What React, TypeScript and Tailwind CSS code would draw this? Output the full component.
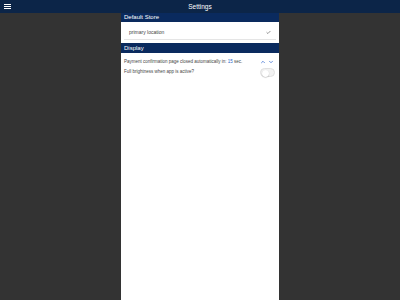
import { Check, ChevronUp, ChevronDown } from "lucide-react";

export default function App() {
  return (
    <div className="flex h-[300px] w-[400px] flex-col bg-[#333333] font-['Liberation_Sans',Arial,sans-serif]">
      <header className="relative flex h-[13px] items-center justify-center bg-[#0c2548]">
        <div className="absolute left-[4px] top-[4px] flex flex-col gap-[1px]">
          <span className="block h-[1px] w-[7px] bg-white" />
          <span className="block h-[1px] w-[7px] bg-white" />
          <span className="block h-[1px] w-[7px] bg-white" />
        </div>
        <span className="text-[6.5px] text-white">Settings</span>
      </header>
      <div className="flex flex-1 justify-center">
        <main className="w-[158px] bg-white">
          <div className="flex h-[9px] items-center bg-[#0a2a5e] px-[3px] text-[6px] text-white">Default Store</div>
          <div className="mx-[3px] flex h-[18px] items-center justify-between border-b border-[#e5e5e5] px-[5px] pt-[4px] text-[5px] text-[#444]">
            <span>primary location</span>
            <Check className="h-[5px] w-[5px] text-[#555]" strokeWidth={3} />
          </div>
          <div className="mt-[3px] flex h-[10px] items-center bg-[#0a2a5e] px-[3px] text-[6px] text-white">Display</div>
          <div className="mt-[4px] flex h-[10px] items-center justify-between px-[3px] text-[4.5px] text-[#444]">
            <span>
              Payment confirmation page closed automatically in: <span className="text-[#2563c9]">15</span> sec.
            </span>
            <div className="flex items-center gap-[2px] pr-[2px] text-[#3b6fd0]">
              <ChevronUp className="h-[6px] w-[6px]" strokeWidth={3} />
              <ChevronDown className="h-[6px] w-[6px]" strokeWidth={3} />
            </div>
          </div>
          <div className="flex h-[11px] items-center justify-between px-[3px] text-[4.5px] text-[#444]">
            <span>Full brightness when app is active?</span>
            <div className="mr-[1px] h-[9px] w-[15px] rounded-full border border-[#e0e0e0] bg-[#f2f2f2] p-[0.5px]">
              <div className="h-[7px] w-[7px] rounded-full bg-white shadow-[0_0.5px_1px_rgba(0,0,0,0.3)]" />
            </div>
          </div>
        </main>
      </div>
    </div>
  );
}
